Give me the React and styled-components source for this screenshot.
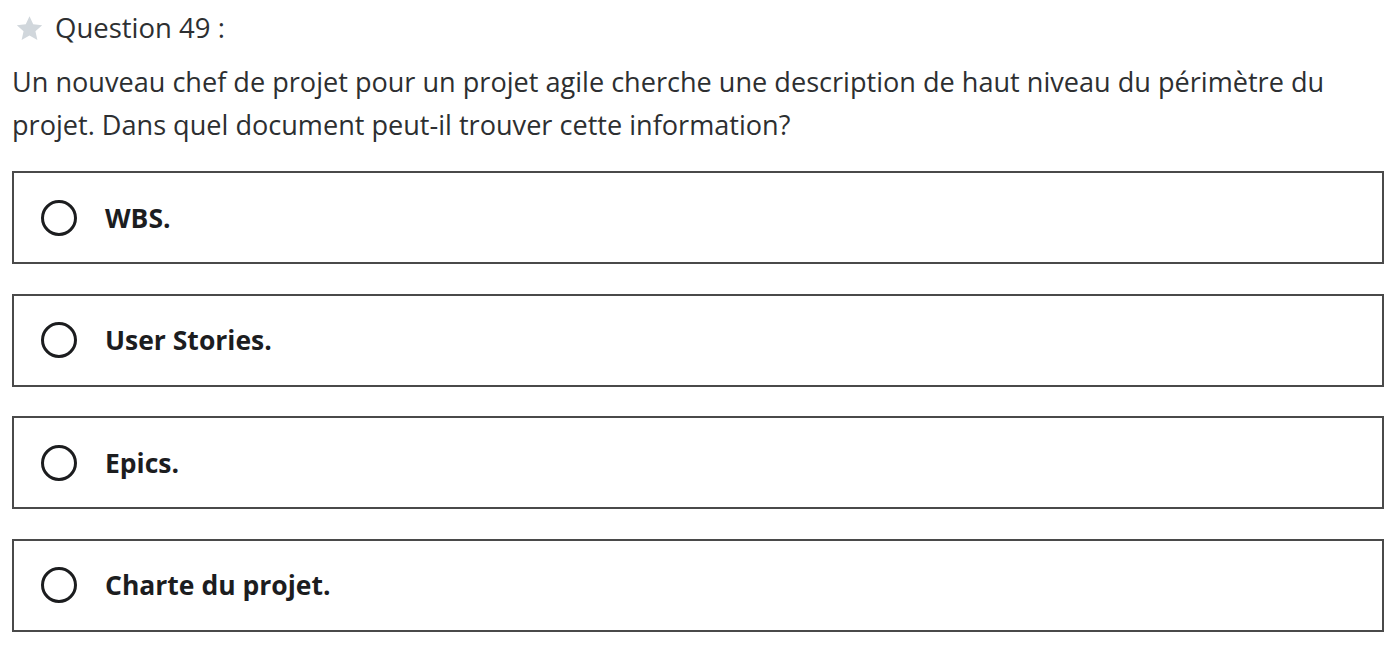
import React from 'react';
import styled, { createGlobalStyle } from 'styled-components';

const GlobalStyle = createGlobalStyle`
    body{
        margin: 0;
        background: #fff;
        font-family: "Open Sans", "Liberation Sans", sans-serif;
        color: #1c1d1f;
    }
`;

const options = ['WBS.', 'User Stories.', 'Epics.', 'Charte du projet.'];

function StarIcon() {
    return (
        <svg width="31" height="31" viewBox="0 0 24 24">
            <path d="M12 2.5l2.9 6.3 6.9.7-5.2 4.6 1.5 6.8L12 17.4l-6.1 3.5 1.5-6.8-5.2-4.6 6.9-.7z" fill="#d1d7dc" />
        </svg>
    );
}

function App() {
    return (
        <>
            <GlobalStyle />
            <Page>
                <Header>
                    <StarIcon />
                    <span>Question 49 :</span>
                </Header>
                <Prompt>
                    Un nouveau chef de projet pour un projet agile cherche une description de haut niveau du périmètre du projet. Dans quel document peut-il trouver cette information?
                </Prompt>
                <OptionList>
                    {options.map((o) => (
                        <Option key={o}>
                            <Radio />
                            <OptionText>{o}</OptionText>
                        </Option>
                    ))}
                </OptionList>
            </Page>
        </>
    );
}

const Page = styled.div`
    padding: 11px 16px 0 12px;
    width: 1372px;
`;

const Header = styled.div`
    display: flex;
    align-items: center;
    gap: 10px;
    padding-left: 2px;
    font-size: 27.5px;
    line-height: 34px;
    color: #2d2f31;
    height: 34px;
`;

const Prompt = styled.p`
    margin: 15px 0 0 0;
    font-size: 27.1px;
    line-height: 43px;
    color: #2d2f31;
    max-width: 1345px;
`;

const OptionList = styled.div`
    display: flex;
    flex-direction: column;
    gap: 29.6px;
    margin-top: 25px;
`;

const Option = styled.div`
    display: flex;
    align-items: center;
    gap: 28px;
    height: 93px;
    box-sizing: border-box;
    border: 2px solid #4a4a4a;
    padding-left: 27px;
`;

const Radio = styled.span`
    width: 36px;
    height: 36px;
    box-sizing: border-box;
    border: 3px solid #1c1d1f;
    border-radius: 50%;
    flex-shrink: 0;
`;

const OptionText = styled.span`
    font-size: 26.5px;
    font-weight: 700;
    color: #1c1d1f;
`;

export default App;
